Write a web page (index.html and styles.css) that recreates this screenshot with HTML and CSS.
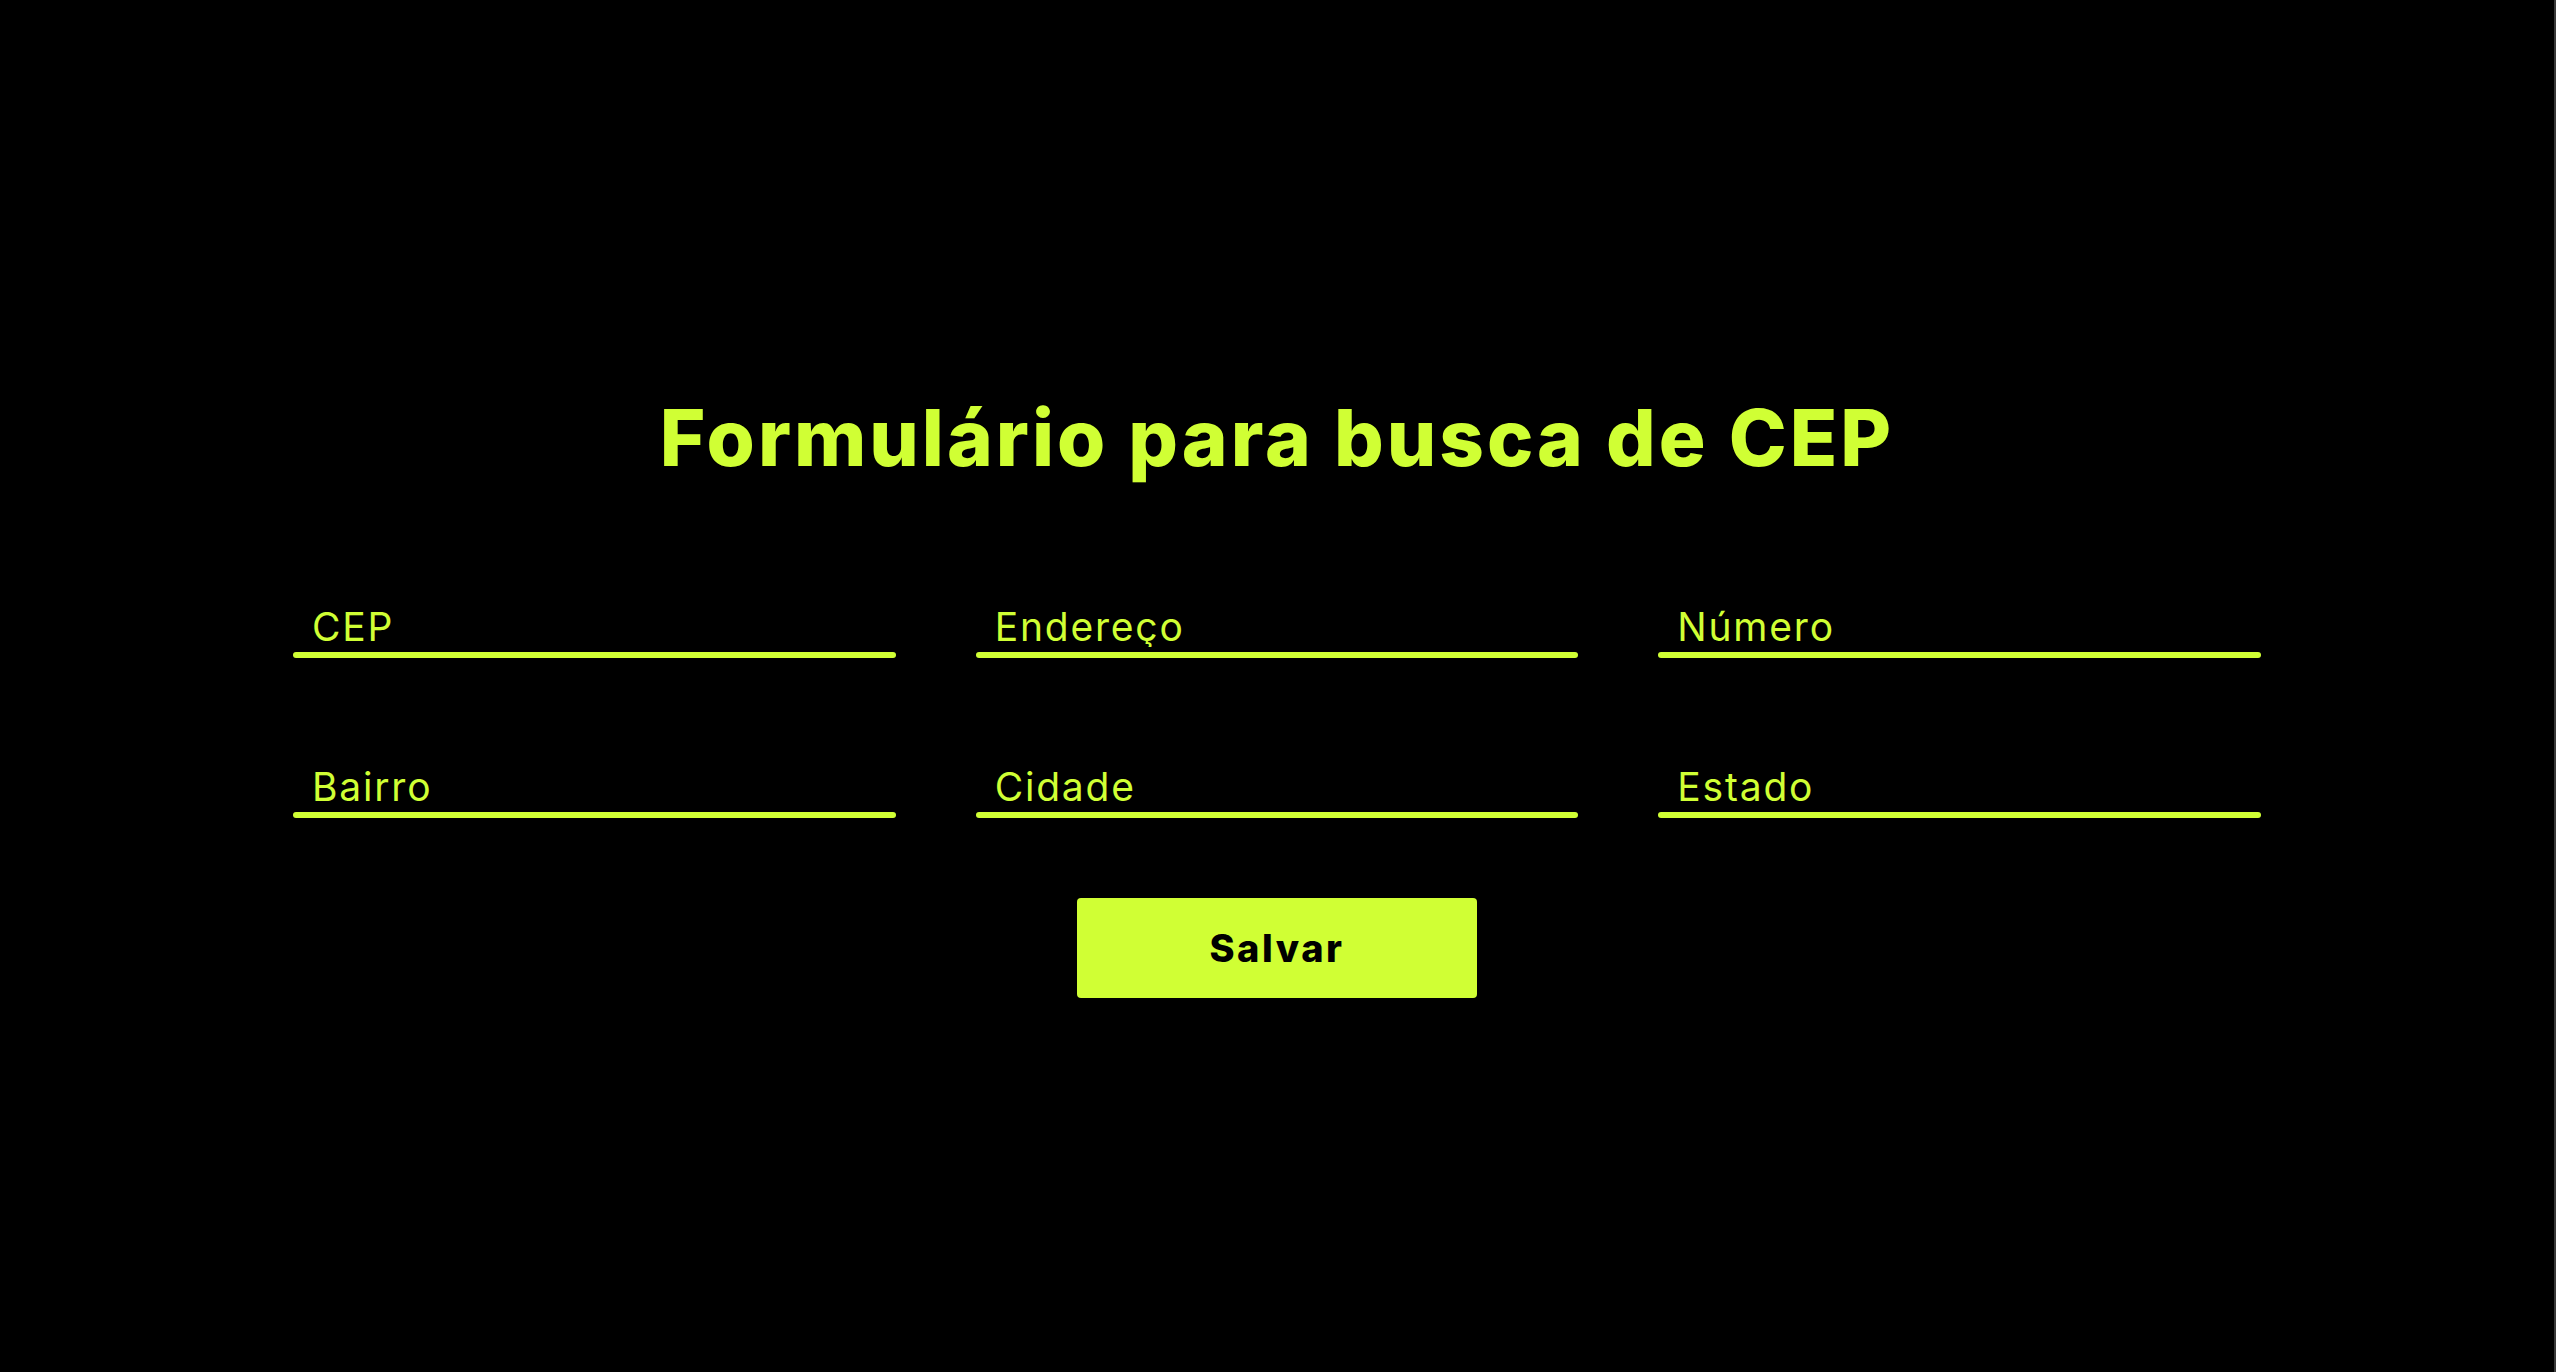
FILE: index.html
```html
<!DOCTYPE html>
<html lang="pt-BR">
<head>
<meta charset="utf-8">
<title>Formulário para busca de CEP</title>
<link rel="stylesheet" href="styles.css">
</head>
<body>
<main class="page">
  <h1 class="title">Formulário para busca de CEP</h1>
  <form class="form">
    <div class="grid">
      <div class="field"><input class="field-input" type="text" placeholder="CEP"><span class="field-line"></span></div>
      <div class="field"><input class="field-input" type="text" placeholder="Endereço"><span class="field-line"></span></div>
      <div class="field"><input class="field-input" type="text" placeholder="Número"><span class="field-line"></span></div>
      <div class="field"><input class="field-input" type="text" placeholder="Bairro"><span class="field-line"></span></div>
      <div class="field"><input class="field-input" type="text" placeholder="Cidade"><span class="field-line"></span></div>
      <div class="field"><input class="field-input" type="text" placeholder="Estado"><span class="field-line"></span></div>
    </div>
    <button class="btn" type="button">Salvar</button>
  </form>
</main>
</body>
</html>
```

FILE: styles.css
```css
* { box-sizing: border-box; }

html, body {
  margin: 0;
  padding: 0;
  background: #000;
}

body {
  font-family: "Inter", "Noto Sans", sans-serif;
  color: #d0ff34;
}

.page {
  min-height: 100vh;
  border-right: 2px solid #3a3a3a;
  display: flex;
  flex-direction: column;
  align-items: center;
  padding-top: 399px;
}

.title {
  margin: 0;
  font-size: 78px;
  line-height: 78px;
  font-weight: 800;
  color: #d0ff34;
  letter-spacing: 3px;
}

.form {
  margin-top: 130px;
  display: flex;
  flex-direction: column;
  align-items: center;
}

.grid {
  width: 1968px;
  display: grid;
  grid-template-columns: repeat(3, 1fr);
  column-gap: 80px;
  row-gap: 109px;
}

.field {
  display: flex;
  flex-direction: column;
}

.field-input {
  display: block;
  width: 100%;
  height: 40px;
  margin: 0;
  padding: 0 0 0 19px;
  border: none;
  outline: none;
  background: transparent;
  font-family: inherit;
  font-size: 39px;
  line-height: 40px;
  font-weight: 400;
  letter-spacing: 1.8px;
  color: #d0ff34;
}

.field-input::placeholder {
  color: #d0ff34;
  opacity: 1;
}

.field-line {
  display: block;
  height: 6px;
  margin-top: 5px;
  border-radius: 3px;
  background: #d0ff34;
}

.btn {
  margin-top: 80px;
  width: 400px;
  height: 100px;
  border: none;
  border-radius: 4px;
  background: #d0ff34;
  color: #000;
  font-family: inherit;
  font-size: 38px;
  font-weight: 800;
  letter-spacing: 2.5px;
  cursor: pointer;
}
```
